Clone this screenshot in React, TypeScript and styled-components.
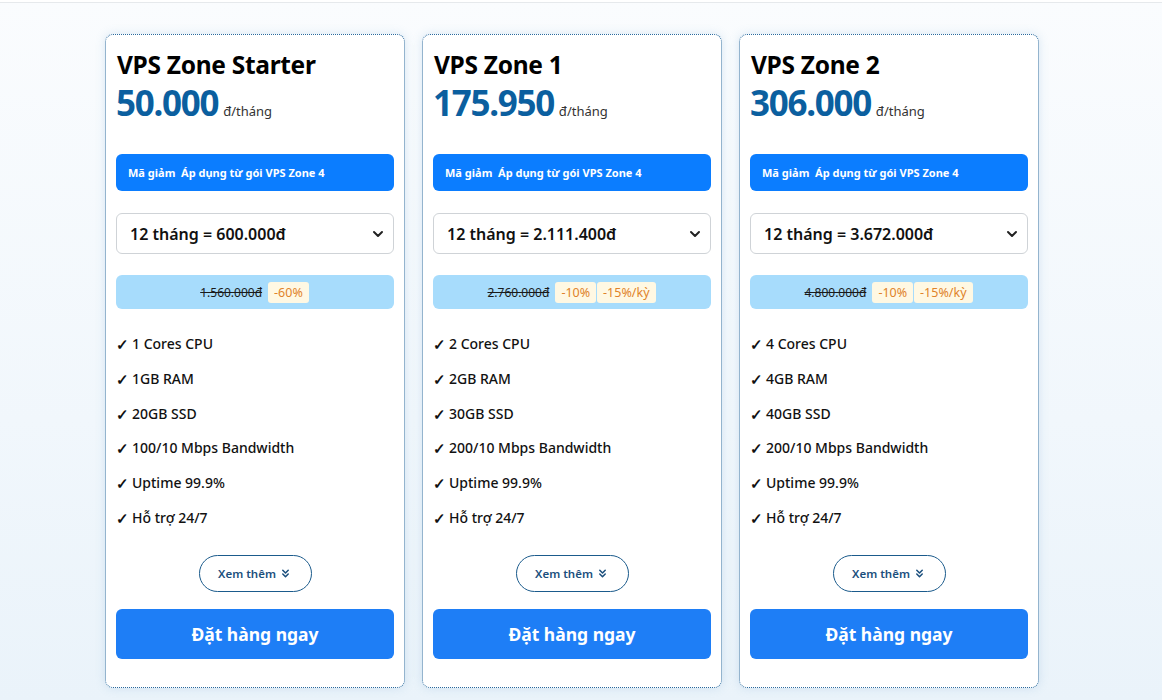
import React from 'react';
import styled, {createGlobalStyle} from 'styled-components';
import {ChevronDown, ChevronsDown} from 'lucide-react';

interface Plan {
    name: string;
    price: string;
    cycle: string;
    oldPrice: string;
    badges: string[];
    features: string[];
}

const plans: Plan[] = [
    {
        name: 'VPS Zone Starter',
        price: '50.000',
        cycle: '12 tháng = 600.000đ',
        oldPrice: '1.560.000đ',
        badges: ['-60%'],
        features: ['1 Cores CPU', '1GB RAM', '20GB SSD', '100/10 Mbps Bandwidth', 'Uptime 99.9%', 'Hỗ trợ 24/7'],
    },
    {
        name: 'VPS Zone 1',
        price: '175.950',
        cycle: '12 tháng = 2.111.400đ',
        oldPrice: '2.760.000đ',
        badges: ['-10%', '-15%/kỳ'],
        features: ['2 Cores CPU', '2GB RAM', '30GB SSD', '200/10 Mbps Bandwidth', 'Uptime 99.9%', 'Hỗ trợ 24/7'],
    },
    {
        name: 'VPS Zone 2',
        price: '306.000',
        cycle: '12 tháng = 3.672.000đ',
        oldPrice: '4.800.000đ',
        badges: ['-10%', '-15%/kỳ'],
        features: ['4 Cores CPU', '4GB RAM', '40GB SSD', '200/10 Mbps Bandwidth', 'Uptime 99.9%', 'Hỗ trợ 24/7'],
    },
];

const GlobalStyle = createGlobalStyle`
  html, body {
    margin: 0;
    padding: 0;
  }

  body {
    font-family: "Noto Sans", "Open Sans", sans-serif;
    background: #f9fbfd;
  }

  * {
    box-sizing: border-box;
  }
`;

const PricingCard: React.FC<{plan: Plan}> = ({plan}) => (
    <Card>
        <Title>{plan.name}</Title>
        <PriceRow>
            <Price>{plan.price}</Price>
            <Unit>đ/tháng</Unit>
        </PriceRow>
        <Promo>Mã giảm&nbsp; Áp dụng từ gói VPS Zone 4</Promo>
        <SelectWrap>
            <CycleSelect defaultValue={plan.cycle}>
                <option>{plan.cycle}</option>
            </CycleSelect>
            <SelectIcon><ChevronDown size={16} strokeWidth={3}/></SelectIcon>
        </SelectWrap>
        <SaleBar>
            <OldPrice>{plan.oldPrice}</OldPrice>
            {plan.badges.map(b => <Badge key={b}>{b}</Badge>)}
        </SaleBar>
        <Features>
            {plan.features.map(f => <Feature key={f}><Tick>✓</Tick>{f}</Feature>)}
        </Features>
        <MoreRow>
            <MoreButton>Xem thêm <ChevronsDown size={13} strokeWidth={2.8}/></MoreButton>
        </MoreRow>
        <OrderButton>Đặt hàng ngay</OrderButton>
    </Card>
);

const App: React.FC = () => (
    <>
        <GlobalStyle/>
        <Page>
            <TopLine/>
            <Cards>
                {plans.map(p => <PricingCard key={p.name} plan={p}/>)}
            </Cards>
        </Page>
    </>
);

const Page = styled.div`
  min-height: 700px;
  background: linear-gradient(180deg, #fafcfe 0%, #f1f7fc 60%, #eaf3fa 100%);
`;

const TopLine = styled.div`
  height: 3px;
  background: #ffffff;
  border-bottom: 1px solid #e6e9ec;
`;

const Cards = styled.div`
  display: flex;
  gap: 17px;
  padding: 31px 0 0 105px;
`;

const Card = styled.div`
  width: 300px;
  height: 654px;
  padding: 10px;
  background: #fff;
  border: 1px dotted #2a6a9e;
  border-radius: 8px;
  box-shadow: 0 0 10px rgba(120, 170, 210, 0.25);
  display: flex;
  flex-direction: column;
`;

const Title = styled.h2`
  margin: 4px 0 0 1px;
  font-size: 24.5px;
  line-height: 31px;
  font-weight: 700;
  color: #000;
  letter-spacing: -0.3px;
`;

const PriceRow = styled.div`
  display: flex;
  align-items: baseline;
  gap: 5px;
  margin-top: 1px;
`;

const Price = styled.span`
  font-size: 35px;
  line-height: 44px;
  font-weight: 700;
  color: #0b5f9f;
  letter-spacing: -1.3px;
`;

const Unit = styled.span`
  font-size: 13px;
  color: #333;
`;

const Promo = styled.div`
  margin-top: 29px;
  height: 37px;
  padding: 0 12px;
  display: flex;
  align-items: center;
  background: #0b7dff;
  border-radius: 6px;
  color: #fff;
  font-size: 11px;
  font-weight: 700;
`;

const SelectWrap = styled.div`
  position: relative;
  margin-top: 22px;
`;

const CycleSelect = styled.select`
  appearance: none;
  width: 100%;
  height: 41px;
  padding: 0 34px 0 13px;
  border: 1px solid #cfd3d7;
  border-radius: 6px;
  background: #fff;
  font-family: inherit;
  font-size: 16px;
  font-weight: 600;
  color: #111;
  outline: none;
`;

const SelectIcon = styled.span`
  position: absolute;
  right: 8px;
  top: 13px;
  display: flex;
  color: #222;
  pointer-events: none;
`;

const SaleBar = styled.div`
  margin-top: 21px;
  height: 34px;
  background: #a7dcfc;
  border-radius: 6px;
  display: flex;
  align-items: center;
  justify-content: center;
`;

const OldPrice = styled.span`
  font-size: 12px;
  color: #1a1a1a;
  text-decoration: line-through;
  margin-right: 6px;
`;

const Badge = styled.span`
  height: 21px;
  padding: 0 6px;
  display: flex;
  align-items: center;
  background: #fff8e3;
  border-radius: 3px;
  color: #e0832a;
  font-size: 12.5px;
  margin-right: 1px;
`;

const Features = styled.ul`
  list-style: none;
  margin: 25px 0 0;
  padding: 0;
`;

const Feature = styled.li`
  height: 34.8px;
  font-size: 14px;
  font-weight: 500;
  color: #111;
  line-height: 20px;
  display: flex;
`;

const Tick = styled.span`
  width: 16px;
  font-size: 15px;
  font-weight: 700;
`;

const MoreRow = styled.div`
  display: flex;
  justify-content: center;
  margin-top: 12px;
`;

const MoreButton = styled.button`
  width: 113px;
  height: 37px;
  border: 1px solid #1b5b8c;
  border-radius: 19px;
  background: #fff;
  color: #1b4f7d;
  font-family: inherit;
  font-size: 11.5px;
  font-weight: 600;
  display: flex;
  align-items: center;
  justify-content: center;
  gap: 3px;
`;

const OrderButton = styled.button`
  margin-top: 17px;
  height: 50px;
  border: none;
  border-radius: 6px;
  background: #1e7ef6;
  color: #fff;
  font-family: inherit;
  font-size: 17.5px;
  font-weight: 700;
`;

export default App;
